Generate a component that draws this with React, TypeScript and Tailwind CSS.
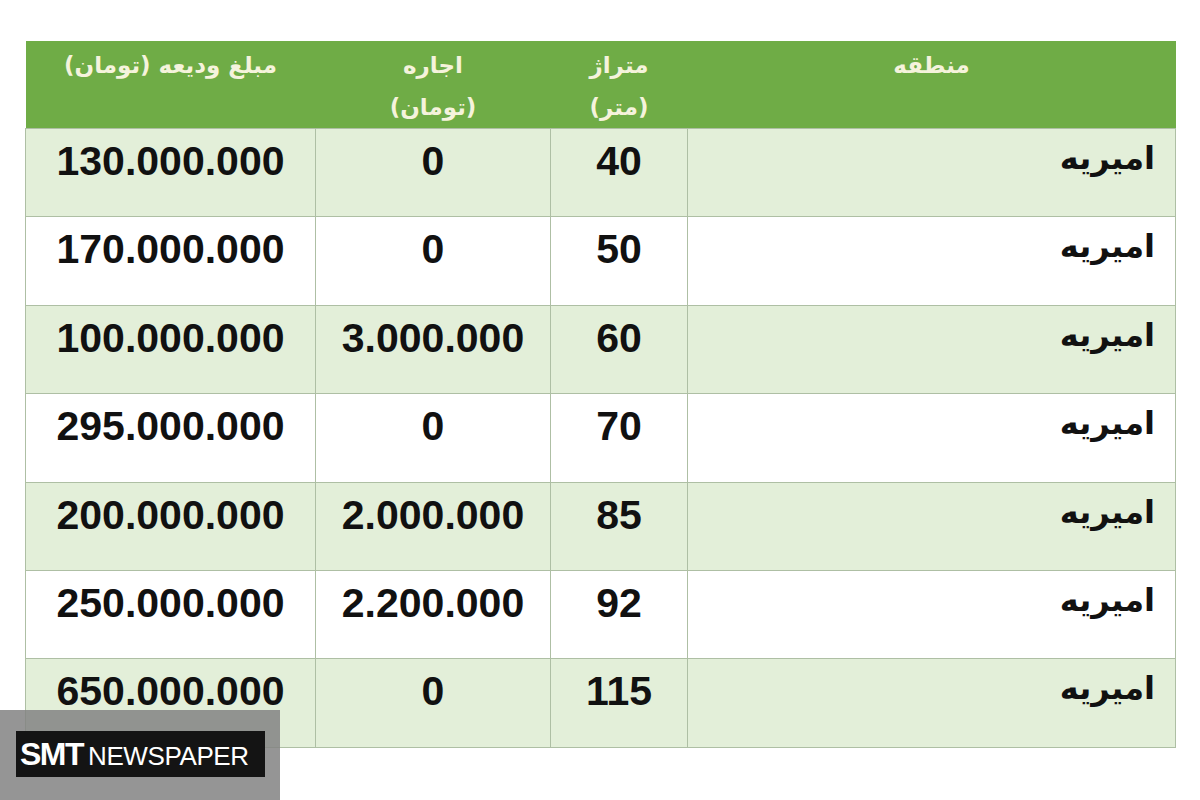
import React from "react";

const rows = [
  { area: "امیریه", size: "40", rent: "0", deposit: "130.000.000" },
  { area: "امیریه", size: "50", rent: "0", deposit: "170.000.000" },
  { area: "امیریه", size: "60", rent: "3.000.000", deposit: "100.000.000" },
  { area: "امیریه", size: "70", rent: "0", deposit: "295.000.000" },
  { area: "امیریه", size: "85", rent: "2.000.000", deposit: "200.000.000" },
  { area: "امیریه", size: "92", rent: "2.200.000", deposit: "250.000.000" },
  { area: "امیریه", size: "115", rent: "0", deposit: "650.000.000" },
];

const num = "font-['Liberation_Sans',Arial,sans-serif] text-[41px] font-bold leading-none text-[#111] text-center align-top p-0 pt-[12px]";
const cell = "border border-[#aebfa4]";
const head = "font-['DejaVu_Sans',sans-serif] font-bold text-[23px] text-[#f5f3dc] align-top p-0 pt-[3px] text-center leading-[42px]";

export default function App() {
  return (
    <div className="relative w-[1200px] h-[800px] bg-white overflow-hidden">
      <div className="pt-[41px] px-[25px]">
        <table dir="rtl" className="w-[1150px] border-collapse table-fixed">
          <colgroup>
            <col className="w-[488px]" />
            <col className="w-[137px]" />
            <col className="w-[235px]" />
            <col className="w-[290px]" />
          </colgroup>
          <thead>
            <tr className="bg-[#6fac46] h-[87px]">
              <th className={head}>منطقه</th>
              <th className={head}>
                متراژ
                <br />
                (متر)
              </th>
              <th className={head}>
                اجاره
                <br />
                (تومان)
              </th>
              <th className={head}>مبلغ ودیعه (تومان)</th>
            </tr>
          </thead>
          <tbody>
            {rows.map((r, i) => (
              <tr
                key={i}
                className={`h-[88.4px] ${i % 2 === 0 ? "bg-[#e3efd9]" : "bg-white"}`}
              >
                <td
                  className={`${cell} align-top p-0 pt-[13px] pr-[20px] text-right font-['DejaVu_Sans',sans-serif] font-bold text-[32px] leading-none text-[#111]`}
                >
                  {r.area}
                </td>
                <td className={`${cell} ${num}`}>{r.size}</td>
                <td className={`${cell} ${num}`}>{r.rent}</td>
                <td className={`${cell} ${num}`}>{r.deposit}</td>
              </tr>
            ))}
          </tbody>
        </table>
      </div>

      {/* watermark */}
      <div className="absolute left-0 top-[710px] w-[280px] h-[90px] bg-[#828282]/85 pt-[21px] pl-[16px]">
        <div className="w-[249px] h-[46px] bg-[#141414] flex items-center pl-[4px] gap-[5px] font-['Liberation_Sans',Arial,sans-serif] text-white">
          <span className="text-[32px] font-bold tracking-[-1.5px] leading-none">SMT</span>
          <span className="text-[26px] tracking-[-0.4px] leading-none mt-[3px]">NEWSPAPER</span>
        </div>
      </div>
    </div>
  );
}
